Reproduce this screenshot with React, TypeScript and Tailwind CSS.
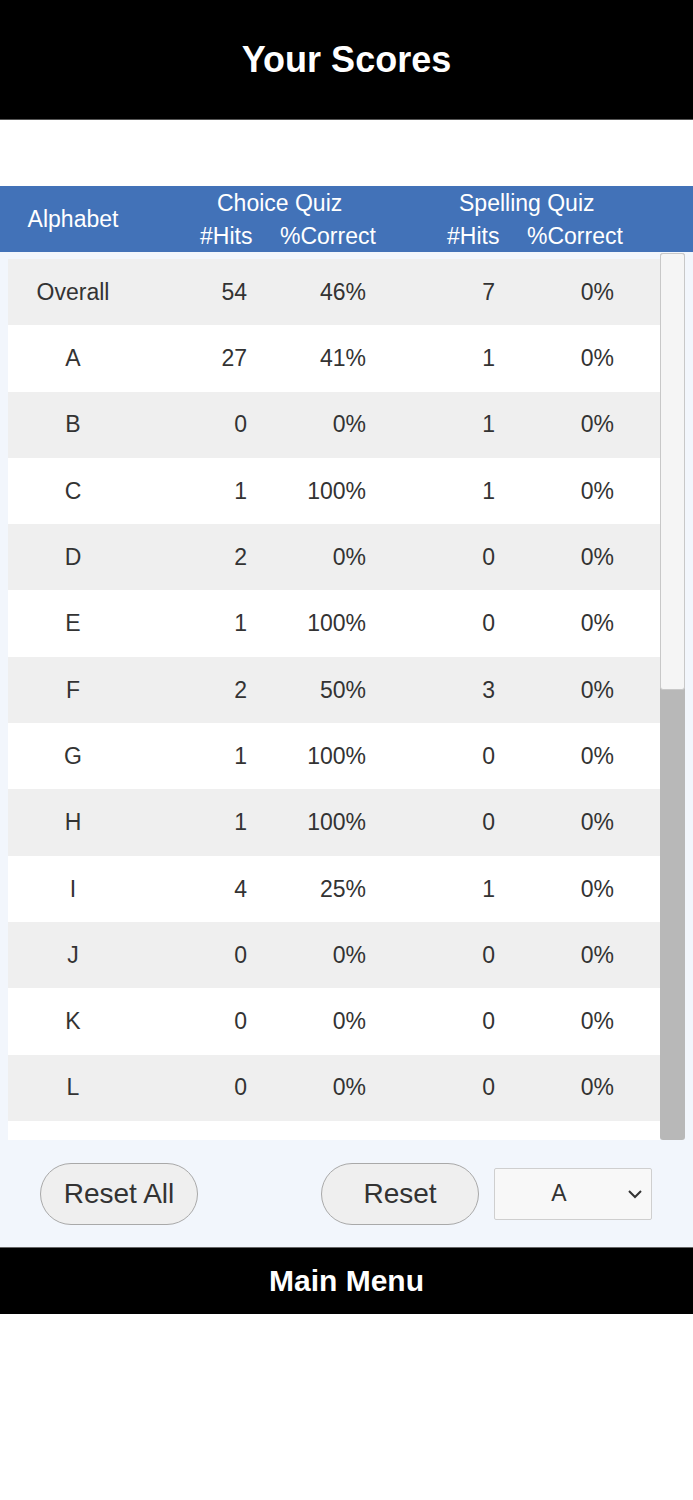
const rows: [string, number, string, number, string][] = [
  ["Overall", 54, "46%", 7, "0%"],
  ["A", 27, "41%", 1, "0%"],
  ["B", 0, "0%", 1, "0%"],
  ["C", 1, "100%", 1, "0%"],
  ["D", 2, "0%", 0, "0%"],
  ["E", 1, "100%", 0, "0%"],
  ["F", 2, "50%", 3, "0%"],
  ["G", 1, "100%", 0, "0%"],
  ["H", 1, "100%", 0, "0%"],
  ["I", 4, "25%", 1, "0%"],
  ["J", 0, "0%", 0, "0%"],
  ["K", 0, "0%", 0, "0%"],
  ["L", 0, "0%", 0, "0%"],
  ["M", 0, "0%", 0, "0%"],
];

export default function App() {
  return (
    <div className="w-[693px] min-h-[1500px] bg-white font-['Liberation_Sans',Arial,sans-serif]">
      {/* title bar */}
      <div className="h-[120px] bg-black border-b border-[#555] flex items-center justify-center">
        <h1 className="text-white text-[36px] font-bold leading-none">Your Scores</h1>
      </div>

      <div className="h-[66px]" />

      {/* table header */}
      <div className="h-[66px] bg-[#4272b8] text-white text-[23px] flex leading-none">
        <div className="w-[146px] flex items-center justify-center">Alphabet</div>
        <div className="flex flex-col pt-[6px] gap-[10px]">
          <div className="flex">
            <span className="ml-[71px] w-[242px]">Choice Quiz</span>
            <span>Spelling Quiz</span>
          </div>
          <div className="flex">
            <span className="ml-[54px] w-[80px]">#Hits</span>
            <span className="w-[167px]">%Correct</span>
            <span className="w-[80px]">#Hits</span>
            <span>%Correct</span>
          </div>
        </div>
      </div>

      {/* scores list */}
      <div className="bg-[#f2f6fc] px-[8px] flex h-[888px] pt-[1px]">
        <div className="flex-1 overflow-hidden pt-[6px] text-[23px] text-[#333]">
          {rows.map(([label, hits, pct, spHits, spPct], i) => (
            <div
              key={label}
              className={`h-[66.3px] flex items-center ${i % 2 === 0 ? "bg-[#efefef]" : "bg-white"}`}
            >
              <div className="w-[130px] text-center">{label}</div>
              <div className="w-[109px] text-right">{hits}</div>
              <div className="w-[119px] text-right">{pct}</div>
              <div className="w-[129px] text-right">{spHits}</div>
              <div className="w-[119px] text-right">{spPct}</div>
            </div>
          ))}
        </div>
        <div className="w-[25px] flex flex-col rounded-[3px] overflow-hidden bg-[#b8b8b8]">
          <div className="h-[437px] bg-[#f5f5f5] border border-[#c8c8c8] rounded-[3px]" />
        </div>
      </div>

      {/* buttons */}
      <div className="h-[107px] bg-[#f2f6fc] flex items-center pl-[40px] text-[#333]">
        <button className="w-[158px] h-[62px] rounded-full bg-[#efefef] border border-[#a9a9a9] text-[28px]">
          Reset All
        </button>
        <button className="ml-[123px] w-[158px] h-[62px] rounded-full bg-[#efefef] border border-[#a9a9a9] text-[28px]">
          Reset
        </button>
        <div className="ml-[15px] w-[158px] h-[52px] bg-[#f8f8f8] border border-[#cfcfcf] rounded-[2px] flex items-center relative">
          <span className="flex-1 text-center text-[23px] pr-[28px]">A</span>
          <svg className="absolute right-[8px] top-[19px]" width="16" height="12" viewBox="0 0 16 12">
            <path d="M2 3 L8 9 L14 3" fill="none" stroke="#333" strokeWidth="2" />
          </svg>
        </div>
      </div>

      {/* main menu */}
      <div className="h-[67px] bg-black border-t border-[#666] flex items-center justify-center">
        <span className="text-white text-[30px] font-bold leading-none">Main Menu</span>
      </div>
    </div>
  );
}
